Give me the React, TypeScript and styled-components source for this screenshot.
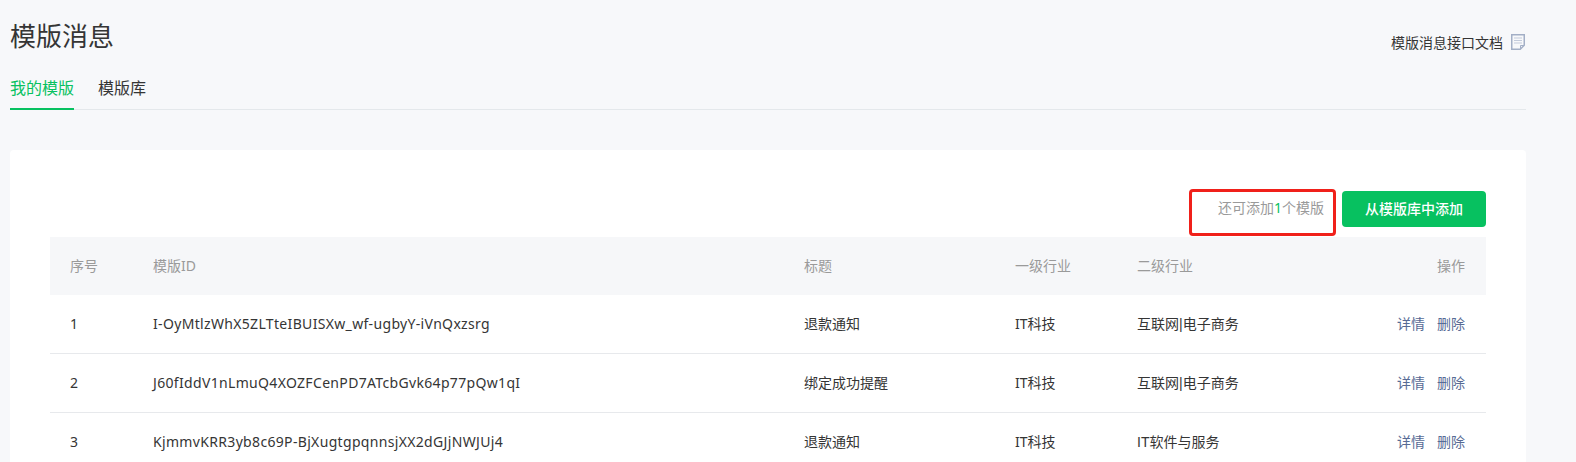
import React from "react";
import styled, { createGlobalStyle } from "styled-components";

const GlobalStyle = createGlobalStyle`
  html, body { margin: 0; padding: 0; background: #f7f8fa; }
  body {
    font-family: "Noto Sans", "Noto Sans CJK SC", sans-serif;
    color: #353535;
    height: 462px;
    overflow: hidden;
  }
`;

const Page = styled.div`
  padding: 0 50px 0 10px;
`;

const Header = styled.div`
  display: flex;
  justify-content: space-between;
  height: 71px;
`;

const Title = styled.h2`
  margin: 0;
  padding-top: 18px;
  font-size: 26px;
  line-height: 36px;
  font-weight: 400;
`;

const DocLink = styled.a`
  display: flex;
  align-items: center;
  gap: 8px;
  height: 20px;
  margin: 32px 1px 0 0;
  font-size: 14px;
`;

const Tabs = styled.div`
  display: flex;
  gap: 24px;
  height: 38px;
  border-bottom: 1px solid #e4e8eb;
`;

const Tab = styled.div<{ $active?: boolean }>`
  height: 39px;
  line-height: 34px;
  font-size: 16px;
  color: ${(p) => (p.$active ? "#07c160" : "#353535")};
  border-bottom: ${(p) => (p.$active ? "2px solid #07c160" : "none")};
  box-sizing: border-box;
`;

const Card = styled.div`
  margin-top: 40px;
  padding: 41px 40px 0;
  background: #fff;
  border-radius: 4px;
`;

const Toolbar = styled.div`
  display: flex;
  justify-content: flex-end;
  align-items: center;
  gap: 18px;
  height: 36px;
  margin-bottom: 10px;
`;

const Quota = styled.span`
  font-size: 14px;
  color: #9a9a9a;
`;

const QuotaCount = styled.span`
  color: #07c160;
`;

const QuotaBox = styled.div`
  position: relative;
  margin-bottom: 4px;
`;

const Highlight = styled.div`
  position: absolute;
  left: -29px;
  right: -12px;
  top: -7px;
  height: 41px;
  border: 3px solid #f0201a;
  border-radius: 4px;
`;

const PrimaryButton = styled.button`
  width: 144px;
  height: 36px;
  padding: 0 0 2px;
  border: none;
  border-radius: 4px;
  background: #07c160;
  color: #fff;
  font-family: inherit;
  font-size: 14px;
  font-weight: 500;
`;

const Row = styled.div<{ $head?: boolean }>`
  display: grid;
  grid-template-columns: 83px 651px 211px 122px 1fr auto;
  align-items: center;
  box-sizing: border-box;
  height: ${(p) => (p.$head ? "58px" : "59px")};
  padding: 0 21px ${(p) => (p.$head ? "2px" : "2px")} 20px;
  font-size: 14px;
  color: ${(p) => (p.$head ? "#9a9a9a" : "#353535")};
  background: ${(p) => (p.$head ? "#f6f7f9" : "#fff")};
  border-bottom: ${(p) => (p.$head ? "none" : "1px solid #e7e9ec")};
`;

const TemplateId = styled.span`
  letter-spacing: 0.33px;
`;

const Industry = styled.span`
  font-family: "Liberation Sans", "Noto Sans CJK SC", sans-serif;
`;

const Actions = styled.div`
  display: flex;
  gap: 12px;
`;

const ActionLink = styled.a`
  color: #576b95;
`;

const rows = [
  { no: "1", id: "I-OyMtlzWhX5ZLTteIBUISXw_wf-ugbyY-iVnQxzsrg", title: "退款通知", first: "IT科技", second: "互联网|电子商务" },
  { no: "2", id: "J60fIddV1nLmuQ4XOZFCenPD7ATcbGvk64p77pQw1qI", title: "绑定成功提醒", first: "IT科技", second: "互联网|电子商务" },
  { no: "3", id: "KjmmvKRR3yb8c69P-BjXugtgpqnnsjXX2dGJjNWJUj4", title: "退款通知", first: "IT科技", second: "IT软件与服务" },
];

export default function App() {
  return (
    <Page>
      <GlobalStyle />
      <Header>
        <Title>模版消息</Title>
        <DocLink>
          模版消息接口文档
          <svg width="14" height="16" viewBox="0 0 14 16" fill="none">
            <path d="M.75.75h12.5v10.5l-4 4H.75z" stroke="#a3afc6" strokeWidth="1.5" />
            <path d="M3 4h8M3 6.5h8M3 9h8" stroke="#c3cbdb" />
            <path d="M9.5 15v-3.5H13" stroke="#a3afc6" />
          </svg>
        </DocLink>
      </Header>
      <Tabs>
        <Tab $active>我的模版</Tab>
        <Tab>模版库</Tab>
      </Tabs>
      <Card>
        <Toolbar>
          <QuotaBox>
            <Quota>
              还可添加<QuotaCount>1</QuotaCount>个模版
            </Quota>
            <Highlight />
          </QuotaBox>
          <PrimaryButton>从模版库中添加</PrimaryButton>
        </Toolbar>
        <Row $head>
          <span>序号</span>
          <span>模版ID</span>
          <span>标题</span>
          <span>一级行业</span>
          <span>二级行业</span>
          <span>操作</span>
        </Row>
        {rows.map((r) => (
          <Row key={r.no}>
            <span>{r.no}</span>
            <TemplateId>{r.id}</TemplateId>
            <span>{r.title}</span>
            <span>{r.first}</span>
            <Industry>{r.second}</Industry>
            <Actions>
              <ActionLink>详情</ActionLink>
              <ActionLink>删除</ActionLink>
            </Actions>
          </Row>
        ))}
      </Card>
    </Page>
  );
}
